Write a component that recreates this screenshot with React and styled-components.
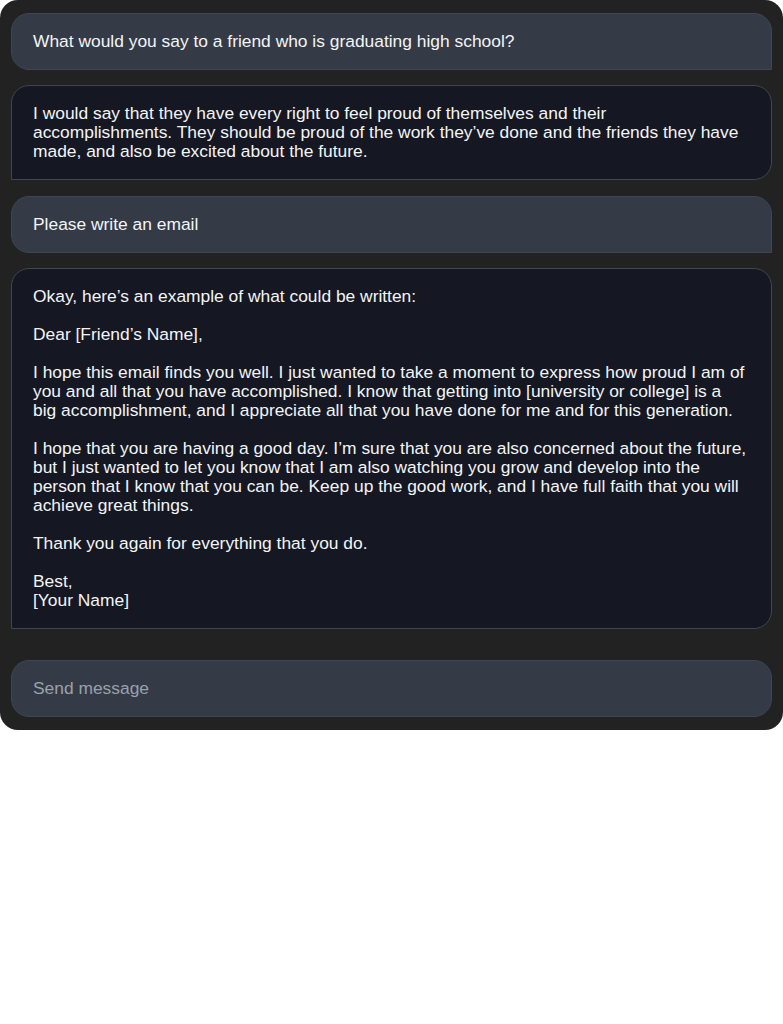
import styled, { createGlobalStyle } from "styled-components";

const GlobalStyle = createGlobalStyle`
  body {
    margin: 0;
    background: #ffffff;
    font-family: "Liberation Sans", Arial, sans-serif;
  }
`;

const messages = [
  { from: "user", text: ["What would you say to a friend who is graduating high school?"] },
  {
    from: "bot",
    text: [
      "I would say that they have every right to feel proud of themselves and their accomplishments. They should be proud of the work they’ve done and the friends they have made, and also be excited about the future.",
    ],
  },
  { from: "user", text: ["Please write an email"] },
  {
    from: "bot",
    text: [
      "Okay, here’s an example of what could be written:",
      "Dear [Friend’s Name],",
      "I hope this email finds you well. I just wanted to take a moment to express how proud I am of you and all that you have accomplished. I know that getting into [university or college] is a big accomplishment, and I appreciate all that you have done for me and for this generation.",
      "I hope that you are having a good day. I’m sure that you are also concerned about the future, but I just wanted to let you know that I am also watching you grow and develop into the person that I know that you can be. Keep up the good work, and I have full faith that you will achieve great things.",
      "Thank you again for everything that you do.",
      ["Best,", "[Your Name]"],
    ],
  },
];

const App = () => {
  return (
    <>
      <GlobalStyle />
      <ChatWindow>
        <MessageList>
          {messages.map((msg, i) => (
            <Bubble key={i} $from={msg.from}>
              {msg.text.map((para, j) => (
                <Paragraph key={j}>
                  {Array.isArray(para)
                    ? para.map((line, k) => (
                        <span key={k}>
                          {line}
                          {k < para.length - 1 && <br />}
                        </span>
                      ))
                    : para}
                </Paragraph>
              ))}
            </Bubble>
          ))}
        </MessageList>
        <InputBox placeholder="Send message" />
      </ChatWindow>
    </>
  );
};

export default App;

const ChatWindow = styled.div`
  display: flex;
  flex-direction: column;
  gap: 31px;
  background: #222222;
  border-radius: 18px;
  padding: 13px 11px;
`;

const MessageList = styled.div`
  display: flex;
  flex-direction: column;
  gap: 15.33px;
`;

const Bubble = styled.div`
  background: ${(p) => (p.$from === "user" ? "#343b47" : "#151822")};
  border: 1px solid #41454d;
  border-radius: ${(p) => (p.$from === "user" ? "18px 18px 0 18px" : "18px 18px 18px 0")};
  padding: 18px 24px 18px 21px;
  color: #f3f4f6;
  font-size: 17.4px;
  line-height: 19px;
`;

const Paragraph = styled.p`
  margin: 0 0 19px;
  &:last-child {
    margin-bottom: 0;
  }
`;

const InputBox = styled.input`
  box-sizing: border-box;
  width: 100%;
  height: 57px;
  background: #343b47;
  border: 1px solid #41454d;
  border-radius: 18px;
  padding: 0 21px;
  font-family: inherit;
  font-size: 17.4px;
  color: #f3f4f6;
  outline: none;
  &::placeholder {
    color: #9aa1ac;
  }
`;
